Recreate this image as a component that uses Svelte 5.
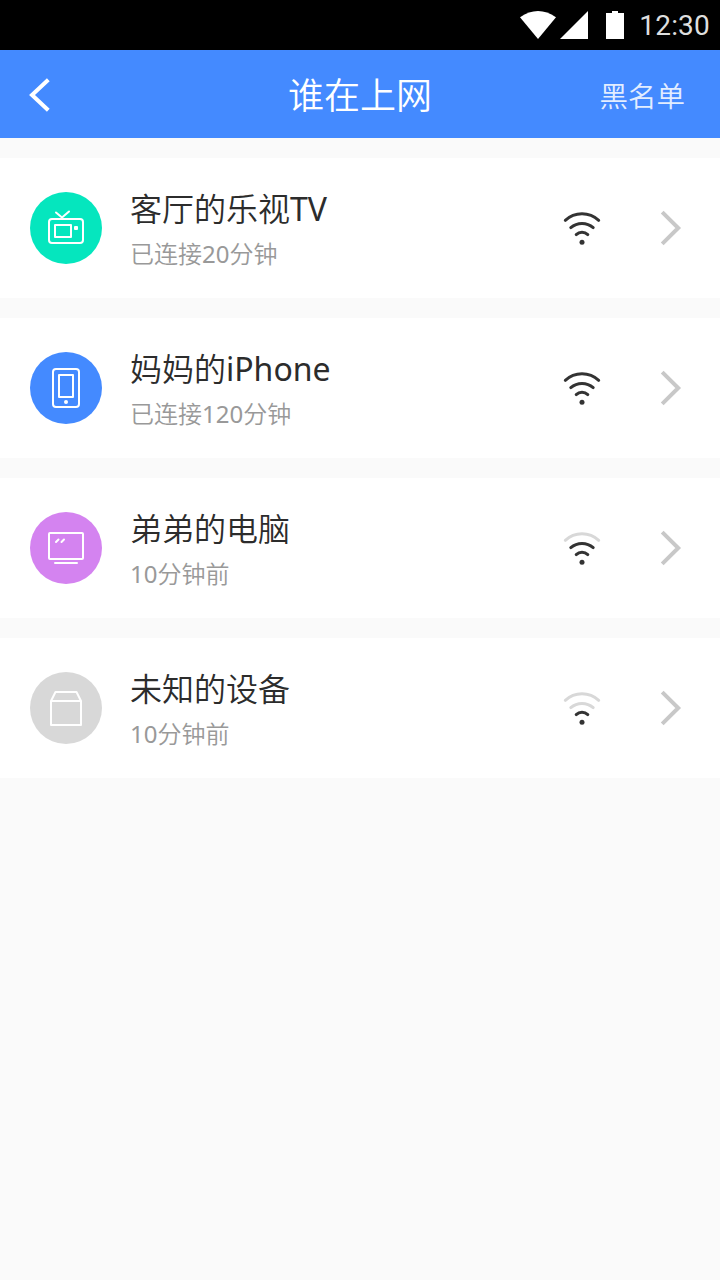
<script lang="ts">
    let devices = [
        { name: "客厅的乐视TV", status: "已连接20分钟", icon: "tv", color: "#05e6be", signal: 3 },
        { name: "妈妈的iPhone", status: "已连接120分钟", icon: "phone", color: "#448aff", signal: 3 },
        { name: "弟弟的电脑", status: "10分钟前", icon: "computer", color: "#d483f0", signal: 2 },
        { name: "未知的设备", status: "10分钟前", icon: "box", color: "#d8d8d8", signal: 1 },
    ];

    // from the inner arc to the outer one
    const arcs = [
        "M14.2 26.6 A8.5 8.5 0 0 1 25.8 26.6",
        "M8.8 19.6 A17 17 0 0 1 31.2 19.6",
        "M3.3 12.3 A24.5 24.5 0 0 1 36.7 12.3",
    ];
</script>

<div class="screen">
    <div class="status-bar">
        <svg class="system-icons" width="104" height="28" viewBox="0 0 104 28">
            <path d="M0 6.2 Q18 -6 36 6.2 L18 28 Z" />
            <path d="M40 28 L68 0 V28 Z" />
            <path d="M86 2 H92 V0 H98 V2 H104 V28 H86 Z" />
        </svg>
        <span class="clock">12:30</span>
    </div>

    <header>
        <button class="back" aria-label="返回">
            <svg width="24" height="40" viewBox="0 0 24 40">
                <path d="M20.3 4.7 L4 20 L20.3 35.3" />
            </svg>
        </button>
        <h1>谁在上网</h1>
        <button class="blacklist">黑名单</button>
    </header>

    <ul class="device-list">
        {#each devices as device}
            <li>
                <div class="avatar" style="background-color: {device.color}">
                    <svg width="72" height="72" viewBox="0 0 72 72">
                        {#if device.icon === "tv"}
                            <rect x="19" y="27" width="34" height="24" rx="3" />
                            <rect x="25" y="33" width="16" height="12" />
                            <path d="M26 20.5 L32 25.5 L39 19.5" />
                            <rect class="solid" x="44" y="34" width="4" height="4" rx="1" />
                        {:else if device.icon === "phone"}
                            <rect x="23" y="17" width="26" height="38" rx="3" />
                            <rect x="29" y="23" width="14" height="22" />
                            <circle class="solid" cx="36" cy="50" r="2" />
                        {:else if device.icon === "computer"}
                            <rect x="19" y="21" width="34" height="26" rx="1" />
                            <path d="M25 51 H47 M26 30 L28.5 27.5 M31.5 30 L34 27.5" />
                        {:else}
                            <path d="M21 29 L25.5 20 H46.5 L51 29 V53 H21 Z M21 29 H51" />
                        {/if}
                    </svg>
                </div>
                <div class="info">
                    <h2>{device.name}</h2>
                    <p>{device.status}</p>
                </div>
                <svg class="wifi" width="40" height="40" viewBox="0 0 40 40">
                    {#each arcs as arc, i}
                        <path d={arc} class:off={i >= device.signal} />
                    {/each}
                    <circle cx="20" cy="34.3" r="2.5" />
                </svg>
                <svg class="arrow" width="24" height="40" viewBox="0 0 24 40">
                    <path d="M4.2 4.2 L20.2 20 L4.2 35.8" />
                </svg>
            </li>
        {/each}
    </ul>
</div>

<style>
    :global(body) {
        background-color: #fafafa;
    }

    .screen {
        width: 720px;
        min-height: 1280px;
        background-color: #fafafa;
        font-family: "Noto Sans", "Noto Sans CJK SC DemiLight", "Noto Sans CJK SC", sans-serif;
    }

    .status-bar {
        height: 50px;
        padding-right: 10px;
        box-sizing: border-box;
        display: flex;
        align-items: center;
        justify-content: flex-end;
        gap: 15px;
        background-color: #000;
    }

    .system-icons {
        fill: #fff;
    }

    .clock {
        font-family: Roboto, sans-serif;
        font-size: 28px;
        letter-spacing: 0.2px;
        color: #dedede;
    }

    header {
        height: 88px;
        padding: 3px 35px 0;
        box-sizing: border-box;
        display: grid;
        grid-template-columns: 1fr auto 1fr;
        align-items: center;
        background-color: #448aff;
        color: #fff;
    }

    h1 {
        margin: 0;
        font-size: 36px;
        font-weight: 350;
        line-height: 48px;
    }

    button {
        padding: 0;
        border: none;
        background: none;
        color: inherit;
        font-family: inherit;
        cursor: pointer;
    }

    .back {
        justify-self: start;
        height: 40px;
        margin: -1px 0 0 -7px;
    }

    .back svg {
        display: block;
    }

    .back path {
        fill: none;
        stroke: #fff;
        stroke-width: 4;
    }

    .blacklist {
        justify-self: end;
        font-size: 28.5px;
        font-weight: 350;
        line-height: 40px;
        opacity: 0.85;
    }

    .device-list {
        list-style-type: none;
        margin: 0;
        padding: 20px 0 0;
        display: flex;
        flex-direction: column;
        gap: 20px;
    }

    li {
        height: 140px;
        padding: 0 38px 0 30px;
        box-sizing: border-box;
        display: flex;
        align-items: center;
        background-color: #fff;
    }

    .avatar {
        width: 72px;
        height: 72px;
        border-radius: 50%;
    }

    .avatar svg {
        display: block;
        fill: none;
        stroke: #fff;
        stroke-width: 2;
        stroke-linecap: round;
        stroke-linejoin: round;
    }

    .avatar .solid {
        fill: #fff;
        stroke: none;
    }

    .info {
        flex: 1;
        margin-left: 28px;
        padding-top: 2px;
    }

    h2 {
        margin: 0;
        font-size: 32px;
        font-weight: 400;
        line-height: 50px;
        color: #2c2c2c;
    }

    p {
        margin: 0;
        font-size: 24px;
        font-weight: 400;
        line-height: 40px;
        color: #999;
    }

    .wifi {
        margin-right: 56px;
        fill: none;
        stroke: #333;
        stroke-width: 3;
        stroke-linecap: round;
    }

    .wifi .off {
        stroke: #d8d8d8;
    }

    .wifi circle {
        fill: #333;
        stroke: none;
    }

    .arrow path {
        fill: none;
        stroke: #c8c8c8;
        stroke-width: 4;
    }
</style>
